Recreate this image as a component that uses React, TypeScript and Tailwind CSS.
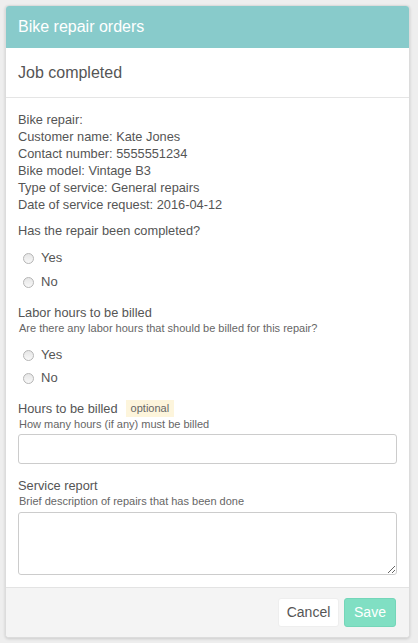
const font = { fontFamily: '"Liberation Sans", Arial, sans-serif' };

function Radio({ label }: { label: string }) {
  return (
    <label className="flex items-center h-6 pl-[5px] gap-[7px] text-[13px] text-[#555]">
      <span className="w-[11px] h-[11px] rounded-full border border-[#b5b5b5] bg-gradient-to-b from-[#e6e6e6] to-[#f8f8f8]" />
      <span>{label}</span>
    </label>
  );
}

function Help({ children }: { children: React.ReactNode }) {
  return <div className="text-[11px] leading-[15px] text-[#666] pl-px">{children}</div>;
}

export default function App() {
  return (
    <div className="min-h-screen bg-[#eeeeee] pt-[5px] pl-[5px] pr-[8px]" style={font}>
      <div className="w-[405px] bg-white rounded-[4px] border border-[#dcdcdc] shadow-[0_1px_3px_rgba(0,0,0,0.15)] overflow-hidden">
        <div className="h-[42px] bg-[#88cbcb] flex items-center px-[12px] text-white text-[16px]">
          Bike repair orders
        </div>
        <div className="h-[50px] flex items-center px-[12px] text-[16px] text-[#555] border-b border-[#e5e5e5]">
          Job completed
        </div>
        <div className="px-[12px] pt-[13px] pb-[12px] text-[12.8px] text-[#555]">
          <div className="leading-[17px]">
            <div>Bike repair:</div>
            <div>Customer name: Kate Jones</div>
            <div>Contact number: 5555551234</div>
            <div>Bike model: Vintage B3</div>
            <div>Type of service: General repairs</div>
            <div>Date of service request: 2016-04-12</div>
          </div>
          <div className="mt-[9px] leading-[17px]">Has the repair been completed?</div>
          <div className="mt-[7px]">
            <Radio label="Yes" />
            <Radio label="No" />
          </div>
          <div className="mt-[10px] leading-[17px]">Labor hours to be billed</div>
          <Help>Are there any labor hours that should be billed for this repair?</Help>
          <div className="mt-[7px]">
            <Radio label="Yes" />
            <div className="-mt-px">
              <Radio label="No" />
            </div>
          </div>
          <div className="mt-[10px] leading-[17px] flex items-center">
            <span>Hours to be billed</span>
            <span className="ml-[8px] bg-[#fdf5dc] text-[#666] text-[11px] leading-[17px] px-[5px]">optional</span>
          </div>
          <Help>How many hours (if any) must be billed</Help>
          <input className="mt-[2px] block w-full h-[30px] border border-[#cccccc] rounded-[3px] bg-white outline-none" />
          <div className="mt-[13px] leading-[17px]">Service report</div>
          <Help>Brief description of repairs that has been done</Help>
          <textarea className="mt-[3px] block w-full h-[63px] border border-[#cccccc] rounded-[3px] bg-white outline-none" />
        </div>
        <div className="h-[50px] bg-[#f4f4f4] border-t border-[#e3e3e3] flex items-start justify-end gap-[5px] pt-[10px] pr-[13px]">
          <button className="h-[29px] w-[61px] bg-white rounded-[3px] border border-[#eeeeee] text-[14px] text-[#555]">
            Cancel
          </button>
          <button className="h-[29px] w-[52px] bg-[#80dfc3] rounded-[3px] border border-[#74d6b9] text-[14px] text-white">
            Save
          </button>
        </div>
      </div>
    </div>
  );
}
